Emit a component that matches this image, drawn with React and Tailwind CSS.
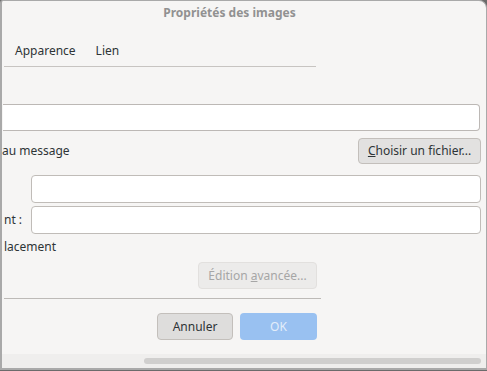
export default function App() {
  const font = { fontFamily: '"Noto Sans", "Open Sans", sans-serif' };
  return (
    <div className="w-[487px] h-[371px] bg-[#6b6b6b] overflow-hidden" style={font}>
      <div className="w-[487px] h-[370px] bg-[#f6f5f4] border-t border-l-2 border-b-2 border-r border-[#a9a9a9] rounded-tr-[8px] rounded-tl-[3px] flex flex-col text-[12px] text-[#2e3436] overflow-hidden">
        {/* title */}
        <div className="h-[23px] w-[455px] flex items-center justify-center font-bold text-[#919191]">
          Propriétés des images
        </div>
        {/* tabs */}
        <div className="h-[42px] flex items-end pb-[6px] pl-[13px] gap-[20px]">
          <span>Apparence</span>
          <span>Lien</span>
        </div>
        <div className="ml-[2px] w-[312px] h-[1px] bg-[#c7c4c1]" />
        {/* input 1 */}
        <div className="mt-[37px] ml-[1px] w-[477px] h-[27px] bg-white border border-l-0 border-[#bcb8b5] rounded-r-[4px]" />
        <div className="mt-[7px] flex items-center justify-between h-[26px] pr-[5px]">
          <span className="ml-[0px]">au message</span>
          <button className="w-[123px] h-[26px] rounded-[4px] border border-[#c3bfbb] bg-[#e2e1e0] text-[#2e3436] text-[12px]">
            <span className="underline">C</span>hoisir un fichier...
          </button>
        </div>
        {/* inputs 2,3 */}
        <div className="mt-[11px] flex items-center">
          <div className="w-[29px]" />
          <div className="w-[450px] h-[28px] bg-white border border-[#c0bcb8] rounded-[4px]" />
        </div>
        <div className="mt-[3px] flex items-center">
          <span className="w-[29px] pl-[2px]">nt :</span>
          <div className="w-[450px] h-[28px] bg-white border border-[#c0bcb8] rounded-[4px]" />
        </div>
        <div className="mt-[3px] h-[20px] flex items-center pl-[2px]">lacement</div>
        <div className="mt-[5px] flex">
          <div className="w-[196px]" />
          <button className="w-[119px] h-[27px] rounded-[4px] border border-[#e2e0de] bg-[#ecebea] text-[#a6a6a6] text-[12px]">
            Édition <span className="underline">a</span>vancée...
          </button>
        </div>
        <div className="mt-[9px] ml-[2px] w-[317px] h-[1px] bg-[#bdbab7]" />
        <div className="mt-[14px] flex gap-[7px]">
          <div className="w-[148px]" />
          <button className="w-[76px] h-[27px] rounded-[4px] border border-[#c3bfbb] bg-[#dedddc] text-[#2e3436] text-[12px]">
            Annuler
          </button>
          <button className="w-[77px] h-[27px] rounded-[4px] bg-[#99c1f1] text-[#e3edfa] text-[12px]">
            OK
          </button>
        </div>
        <div className="mt-auto h-[14px] bg-[#efeeed] flex items-center">
          <div className="w-[142px]" />
          <div className="w-[337px] h-[6px] rounded-full bg-[#d0cfce]" />
        </div>
      </div>
    </div>
  );
}
